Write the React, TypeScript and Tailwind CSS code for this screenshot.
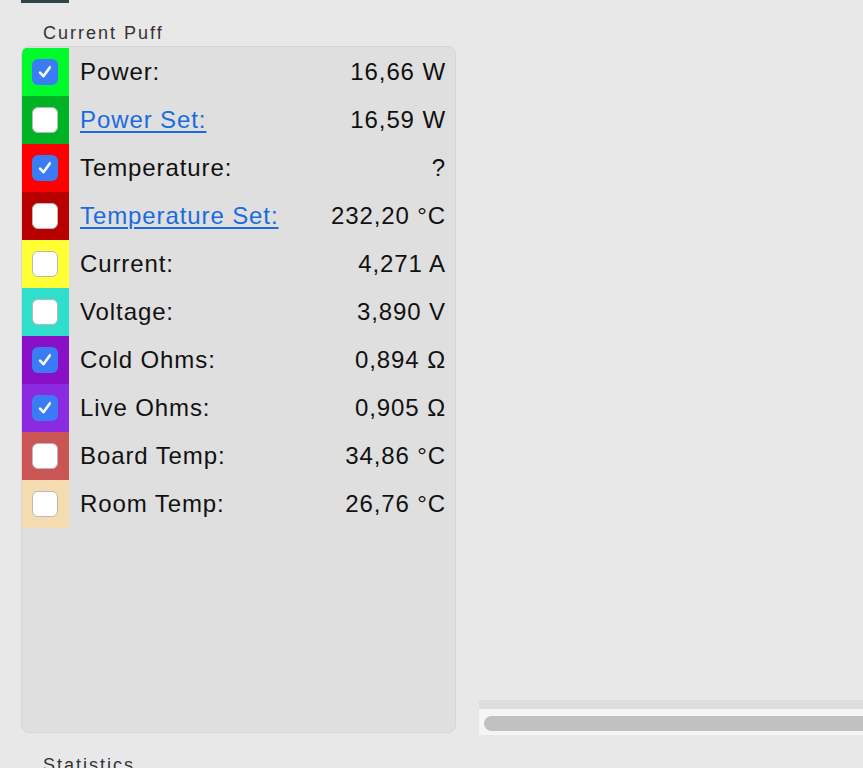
import React from "react";

type Row = { label: string; value: string; color: string; checked: boolean; link?: boolean };

const rows: Row[] = [
  { label: "Power:", value: "16,66 W", color: "bg-[#00fa2c]", checked: true },
  { label: "Power Set:", value: "16,59 W", color: "bg-[#00b324]", checked: false, link: true },
  { label: "Temperature:", value: "?", color: "bg-[#ff0000]", checked: true },
  { label: "Temperature Set:", value: "232,20 °C", color: "bg-[#b80000]", checked: false, link: true },
  { label: "Current:", value: "4,271 A", color: "bg-[#ffff33]", checked: false },
  { label: "Voltage:", value: "3,890 V", color: "bg-[#2fdfcc]", checked: false },
  { label: "Cold Ohms:", value: "0,894 Ω", color: "bg-[#8a10c8]", checked: true },
  { label: "Live Ohms:", value: "0,905 Ω", color: "bg-[#8a2be2]", checked: true },
  { label: "Board Temp:", value: "34,86 °C", color: "bg-[#cb5555]", checked: false },
  { label: "Room Temp:", value: "26,76 °C", color: "bg-[#f5dbb0]", checked: false },
];

function Check({ checked }: { checked: boolean }) {
  if (checked) {
    return (
      <div className="w-[26px] h-[26px] rounded-[6px] bg-[#3a7cf5] flex items-center justify-center">
        <svg width="18" height="18" viewBox="0 0 18 18" fill="none">
          <path d="M4 9.6 L7.4 13.2 L13.8 4.4" stroke="white" strokeWidth="2.6" strokeLinecap="round" strokeLinejoin="round" />
        </svg>
      </div>
    );
  }
  return <div className="w-[26px] h-[26px] rounded-[6px] bg-white border border-[#b8b8b8]" />;
}

export default function App() {
  return (
    <div
      className="w-[863px] h-[768px] bg-[#e8e8e8] overflow-hidden flex"
      style={{ fontFamily: '"Liberation Sans", Arial, Helvetica, sans-serif' }}
    >
      <div className="w-[456px] shrink-0 pl-[21px] flex flex-col">
        <div className="w-[48px] h-[3px] shrink-0 bg-[#2f4548]" />
        <div className="shrink-0 pl-[22px] mt-[19px] text-[18px] leading-[22px] tracking-[2px] text-[#333]">Current Puff</div>
        <div className="shrink-0 mt-[2px] h-[687px] bg-[#dfdfdf] rounded-[8px] border border-[#d6d6d6] pt-[1px] overflow-hidden">
          {rows.map((r) => (
            <div key={r.label} className="h-[48px] flex items-center">
              <div className={`w-[48px] h-[48px] -ml-[1px] flex items-center justify-center ${r.color}`}>
                <Check checked={r.checked} />
              </div>
              <div
                className={`ml-[11px] text-[24px] tracking-[0.9px] ${
                  r.link ? "text-[#1a6be0] underline underline-offset-[3px] decoration-[1.5px]" : "text-[#111]"
                }`}
              >
                {r.label}
              </div>
              <div className="ml-auto pr-[9px] text-[24px] tracking-[0.9px] text-[#111]">{r.value}</div>
            </div>
          ))}
        </div>
        <div className="shrink-0 pl-[22px] mt-[21px] text-[18px] leading-[22px] tracking-[2px] text-[#333]">Statistics</div>
      </div>
      <div className="flex-1 flex flex-col pl-[23px]">
        <div className="mt-[700px] h-[9px] bg-[#dedede]" />
        <div className="h-[26px] bg-[#f5f5f5] pl-[5px] pt-[7px]">
          <div className="h-[15px] rounded-l-full bg-[#c1c1c1]" />
        </div>
      </div>
    </div>
  );
}
